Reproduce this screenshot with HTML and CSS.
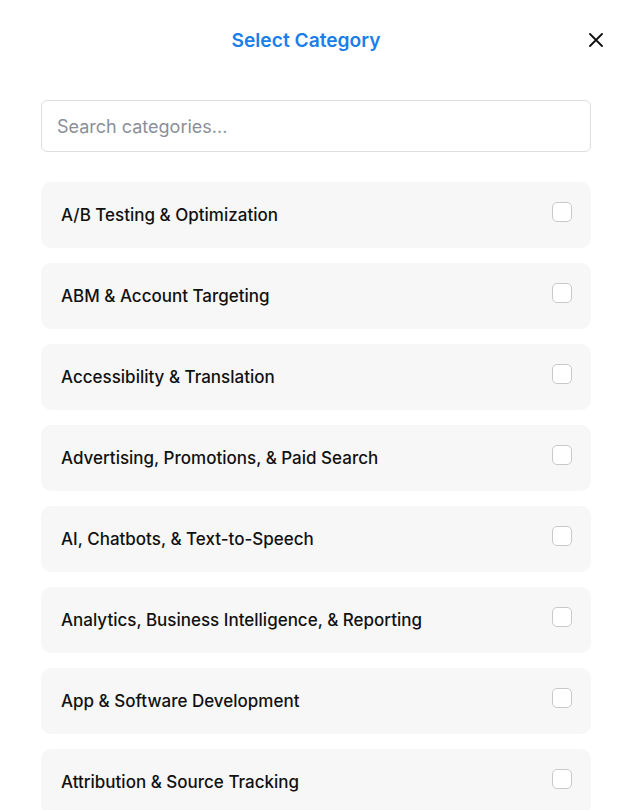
FILE: index.html
```html
<!DOCTYPE html>
<html>
<head>
<meta charset="utf-8">
<link rel="stylesheet" href="styles.css">
</head>
<body>
<div class="modal">
  <div class="header">
    <h1 class="title">Select Category</h1>
    <button class="close" aria-label="Close">
      <svg width="14" height="14" viewBox="0 0 14 14"><path d="M1 1L13 13M13 1L1 13" stroke="#111" stroke-width="1.8" stroke-linecap="round"/></svg>
    </button>
  </div>
  <input class="search" type="text" placeholder="Search categories...">
  <div class="list">
    <label class="row"><span class="name">A/B Testing &amp; Optimization</span><span class="check"></span></label>
    <label class="row"><span class="name">ABM &amp; Account Targeting</span><span class="check"></span></label>
    <label class="row"><span class="name">Accessibility &amp; Translation</span><span class="check"></span></label>
    <label class="row"><span class="name">Advertising, Promotions, &amp; Paid Search</span><span class="check"></span></label>
    <label class="row"><span class="name">AI, Chatbots, &amp; Text-to-Speech</span><span class="check"></span></label>
    <label class="row"><span class="name">Analytics, Business Intelligence, &amp; Reporting</span><span class="check"></span></label>
    <label class="row"><span class="name">App &amp; Software Development</span><span class="check"></span></label>
    <label class="row"><span class="name">Attribution &amp; Source Tracking</span><span class="check"></span></label>
  </div>
</div>
</body>
</html>
```
FILE: styles.css
```css
html, body {
  margin: 0;
  padding: 0;
  background: #fff;
  font-family: Inter, "Noto Sans", sans-serif;
  overflow: hidden;
}
.modal {
  padding: 0 45px 0 41px;
}
.header {
  position: relative;
  height: 80px;
  display: flex;
  align-items: center;
  justify-content: center;
  padding-right: 20px;
}
.title {
  margin: 0;
  font-size: 19.2px;
  font-weight: 600;
  color: #1a7fe9;
}
.close {
  position: absolute;
  right: -12px;
  top: 33px;
  background: none;
  border: 0;
  padding: 0;
  width: 14px;
  height: 14px;
  display: flex;
}
.search {
  display: block;
  box-sizing: border-box;
  width: 100%;
  height: 52px;
  margin-top: 20px;
  border: 1px solid #dedede;
  border-radius: 6px;
  padding: 0 15px;
  font-family: inherit;
  font-size: 18px;
  color: #333;
  outline: none;
}
.search::placeholder {
  color: #8a8f99;
}
.list {
  margin-top: 30px;
  display: flex;
  flex-direction: column;
  gap: 15px;
}
.row {
  box-sizing: border-box;
  height: 66px;
  background: #f7f7f7;
  border-radius: 10px;
  display: flex;
  justify-content: space-between;
  align-items: flex-start;
  padding: 20px 19px 0 20px;
}
.name {
  font-size: 17px;
  font-weight: 500;
  color: #111;
  line-height: 24px;
  margin-top: 1px;
}
.check {
  box-sizing: border-box;
  width: 20px;
  height: 20px;
  border: 1.5px solid #c9c9c9;
  border-radius: 5px;
  background: #fff;
}
```
